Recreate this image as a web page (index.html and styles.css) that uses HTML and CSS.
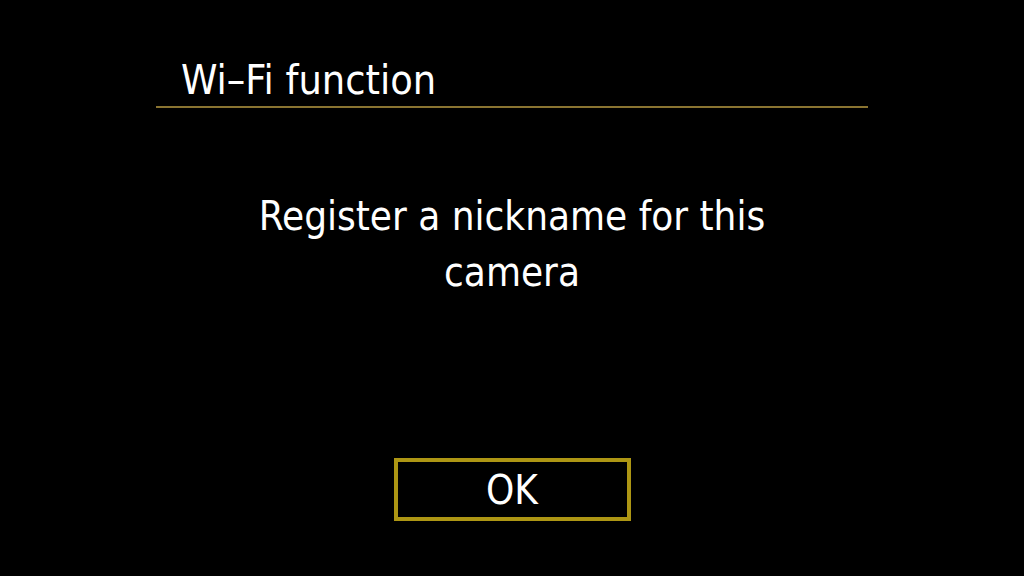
FILE: index.html
```html
<!DOCTYPE html>
<html>
<head>
<meta charset="utf-8">
<link rel="stylesheet" href="styles.css">
</head>
<body>
<div class="screen">
  <header class="head">
    <h1 class="title">Wi–Fi function</h1>
  </header>
  <p class="message">Register a nickname for this<br>camera</p>
  <div class="actions">
    <button class="ok">OK</button>
  </div>
</div>
</body>
</html>
```
FILE: styles.css
```css
html, body {
  margin: 0;
  padding: 0;
  background: #000;
}
.screen {
  width: 1024px;
  height: 576px;
  background: #000;
  color: #fff;
  font-family: "DejaVu Sans", sans-serif;
  font-stretch: condensed;
  display: flex;
  flex-direction: column;
  align-items: center;
}
.head {
  width: 712px;
  margin-top: 55px;
  border-bottom: 2px solid #8a7431;
}
.title {
  margin: 0 0 0 25px;
  font-size: 41px;
  font-weight: normal;
  line-height: 51px;
}
.message {
  margin: 80px 0 0 0;
  font-size: 40px;
  line-height: 56px;
  text-align: center;
}
.actions {
  margin-top: 158px;
}
.ok {
  width: 237px;
  height: 63px;
  box-sizing: border-box;
  border: 4px solid #ad9614;
  background: #000;
  color: #fff;
  font-family: "DejaVu Sans", sans-serif;
  font-stretch: condensed;
  font-size: 40px;
  padding: 0;
}
```
